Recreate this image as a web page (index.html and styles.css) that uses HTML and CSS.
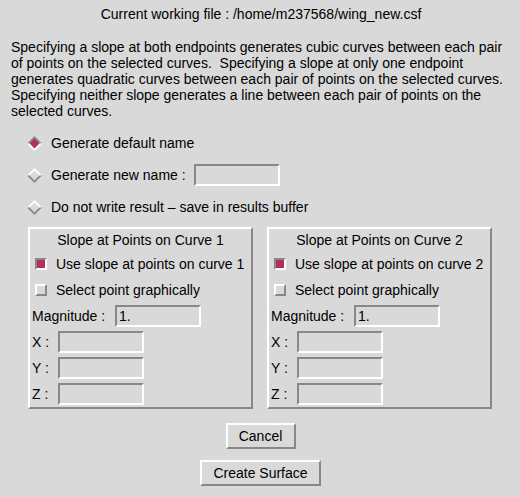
FILE: index.html
```html
<!DOCTYPE html>
<html>
<head>
<meta charset="utf-8">
<link rel="stylesheet" href="styles.css">
</head>
<body>
<div class="title">Current working file : /home/m237568/wing_new.csf</div>
<p class="desc">Specifying a slope at both endpoints generates cubic curves between each pair<br>of points on the selected curves.&nbsp; Specifying a slope at only one endpoint<br>generates quadratic curves between each pair of points on the selected curves.<br>Specifying neither slope generates a line between each pair of points on the<br>selected curves.</p>

<div class="radios">
  <div class="radio">
    <svg class="diamond" width="15" height="15" viewBox="0 0 15 15"><polygon points="0,7.5 7.5,0 15,7.5" fill="#888"/><polygon points="0,7.5 7.5,15 15,7.5" fill="#fff"/><polygon points="7.5,2.6 12.4,7.5 7.5,12.4 2.6,7.5" fill="#b03060"/></svg>
    <span>Generate default name</span>
  </div>
  <div class="radio">
    <svg class="diamond" width="15" height="15" viewBox="0 0 15 15"><polygon points="0,7.5 7.5,0 15,7.5" fill="#fff"/><polygon points="0,7.5 7.5,15 15,7.5" fill="#888"/><polygon points="7.5,2.6 12.4,7.5 7.5,12.4 2.6,7.5" fill="#d9d9d9"/></svg>
    <span>Generate new name :</span>
    <div class="field name-field"></div>
  </div>
  <div class="radio">
    <svg class="diamond" width="15" height="15" viewBox="0 0 15 15"><polygon points="0,7.5 7.5,0 15,7.5" fill="#fff"/><polygon points="0,7.5 7.5,15 15,7.5" fill="#888"/><polygon points="7.5,2.6 12.4,7.5 7.5,12.4 2.6,7.5" fill="#d9d9d9"/></svg>
    <span>Do not write result &ndash; save in results buffer</span>
  </div>
</div>

<div class="frames">
  <div class="frame">
    <div class="frame-title">Slope at Points on Curve 1</div>
    <div class="check-row"><span class="check checked"></span><span>Use slope at points on curve 1</span></div>
    <div class="check-row"><span class="check"></span><span>Select point graphically</span></div>
    <div class="fields">
      <div class="field-row"><span class="lbl wide">Magnitude :</span><div class="field">1.</div></div>
      <div class="field-row"><span class="lbl">X :</span><div class="field"></div></div>
      <div class="field-row"><span class="lbl">Y :</span><div class="field"></div></div>
      <div class="field-row"><span class="lbl">Z :</span><div class="field"></div></div>
    </div>
  </div>
  <div class="frame">
    <div class="frame-title">Slope at Points on Curve 2</div>
    <div class="check-row"><span class="check checked"></span><span>Use slope at points on curve 2</span></div>
    <div class="check-row"><span class="check"></span><span>Select point graphically</span></div>
    <div class="fields">
      <div class="field-row"><span class="lbl wide">Magnitude :</span><div class="field">1.</div></div>
      <div class="field-row"><span class="lbl">X :</span><div class="field"></div></div>
      <div class="field-row"><span class="lbl">Y :</span><div class="field"></div></div>
      <div class="field-row"><span class="lbl">Z :</span><div class="field"></div></div>
    </div>
  </div>
</div>

<div class="buttons">
  <div class="btn cancel">Cancel</div>
  <div class="btn create">Create Surface</div>
</div>
</body>
</html>
```

FILE: styles.css
```css
html, body {
  margin: 0;
  padding: 0;
}
body {
  width: 520px;
  height: 497px;
  overflow: hidden;
  background: #d9d9d9;
  color: #000;
  font-family: "Liberation Sans", Arial, sans-serif;
  font-size: 14px;
  line-height: 16px;
}
.title {
  padding-top: 6px;
  height: 16px;
  text-align: center;
  padding-left: 2px;
}
.desc {
  margin: 17px 0 0 11px;
  white-space: nowrap;
}
.radios {
  margin-top: 13px;
  padding-left: 27px;
  display: flex;
  flex-direction: column;
  gap: 10px;
}
.radio {
  height: 22px;
  display: flex;
  align-items: center;
}
.diamond {
  display: block;
  margin-right: 9px;
}
.field {
  box-sizing: border-box;
  width: 86px;
  height: 22px;
  border: 2px solid;
  border-color: #888 #fff #fff #888;
  padding: 0 2px;
  line-height: 18px;
}
.name-field {
  margin-left: 8px;
}
.frames {
  margin-top: 9px;
  padding-left: 28px;
  display: flex;
  gap: 14px;
}
.frame {
  box-sizing: border-box;
  width: 225px;
  height: 182px;
  border: 2px solid;
  border-color: #fff #888 #888 #fff;
  display: flex;
  flex-direction: column;
}
.frame-title {
  height: 22px;
  line-height: 22px;
  text-align: center;
}
.check-row {
  height: 26px;
  display: flex;
  align-items: center;
  padding-left: 5px;
  gap: 9px;
}
.check {
  box-sizing: border-box;
  width: 12px;
  height: 12px;
  border: 2px solid;
  border-color: #fff #888 #888 #fff;
}
.check.checked {
  border-color: #888 #fff #fff #888;
  background: #b03060;
}
.fields {
  margin-top: 2px;
  padding-left: 2px;
  display: flex;
  flex-direction: column;
  gap: 4px;
}
.field-row {
  display: flex;
  align-items: center;
  height: 22px;
}
.lbl {
  width: 26px;
}
.lbl.wide {
  width: 83px;
}
.buttons {
  margin-top: 14px;
  display: flex;
  flex-direction: column;
  align-items: center;
  gap: 11px;
  padding-left: 1px;
}
.btn {
  box-sizing: border-box;
  height: 26px;
  border: 2px solid;
  border-color: #fff #888 #888 #fff;
  line-height: 22px;
  text-align: center;
}
.cancel {
  width: 70px;
}
.create {
  width: 121px;
}
```
